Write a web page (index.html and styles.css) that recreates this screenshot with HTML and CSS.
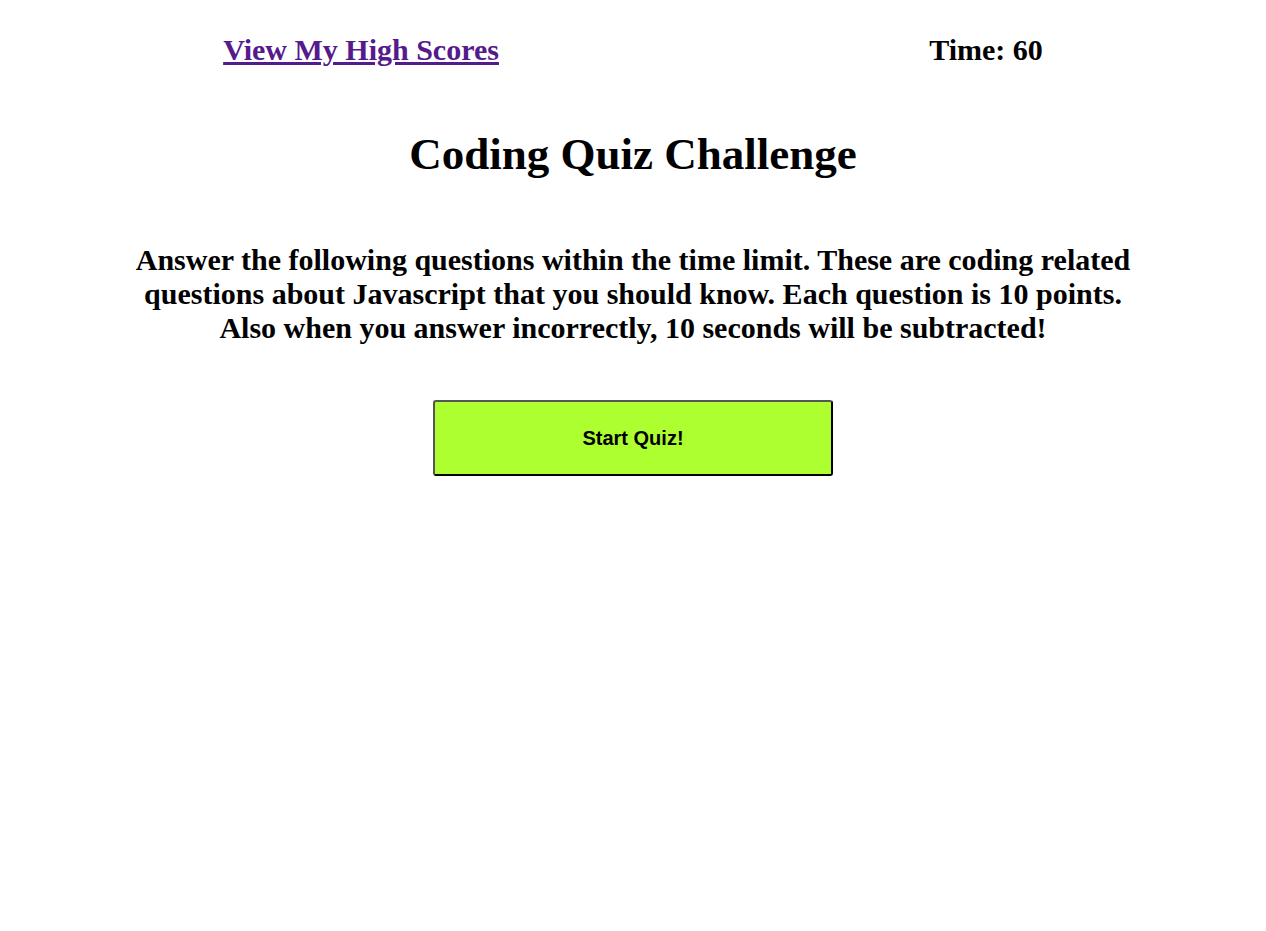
FILE: index.html
```html
<!DOCTYPE html>
<html>
<head>
<meta charset="utf-8">
<title>Coding Quiz Challenge</title>
<link rel="stylesheet" href="styles.css">
</head>
<body>
<header class="top">
  <a class="scores" href="#">View My High Scores</a>
  <div class="timer">Time: 60</div>
</header>
<main class="intro">
  <h1 class="title">Coding Quiz Challenge</h1>
  <p class="lead">Answer the following questions within the time limit. These are coding related questions about Javascript that you should know. Each question is 10 points. Also when you answer incorrectly, 10 seconds will be subtracted!</p>
  <button class="start">Start Quiz!</button>
</main>
</body>
</html>
```
FILE: styles.css
```css
body {
  margin: 8px;
  font-family: "Liberation Serif", "Times New Roman", serif;
  background: #fff;
  color: #000;
}
.top {
  display: flex;
  justify-content: space-around;
  align-items: baseline;
  font-size: 30px;
  font-weight: bold;
  margin-top: 25px;
}
.scores {
  color: #551a8b;
}
.intro {
  display: flex;
  flex-direction: column;
  align-items: center;
}
.title {
  font-size: 45px;
  margin: 61px 0 0;
}
.lead {
  width: 1010px;
  text-align: center;
  font-size: 30px;
  font-weight: bold;
  line-height: 34px;
  margin: 63px 0 0;
}
.start {
  margin-top: 55px;
  width: 400px;
  height: 76px;
  background: #adff2f;
  border: 2px solid;
  border-color: #555 #000 #000 #555;
  border-radius: 3px;
  font-family: "Liberation Sans", Arial, sans-serif;
  font-weight: bold;
  font-size: 20px;
  color: #000;
}
```
